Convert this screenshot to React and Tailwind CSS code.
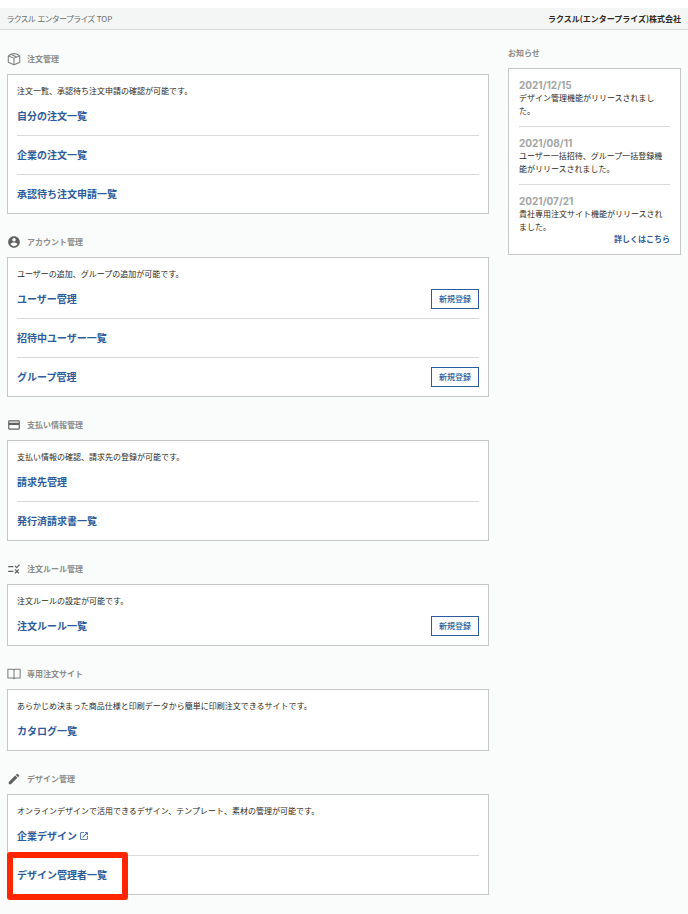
import React from "react";
import { MdCreditCard, MdEdit, MdOpenInNew, MdRule } from "react-icons/md";

const BoxIcon = () => (
  <svg viewBox="0 0 24 24" className="size-[14px]" fill="none" stroke="#7c7e7d" strokeWidth="1.8" strokeLinejoin="round">
    <path d="M12 2.5 17.5 3.8 21.8 7V17.5L12 22 2.2 17.5V7L6.5 3.8Z" />
    <path d="M2.2 7 12 10.5 21.8 7M12 10.5V22M6.5 3.8 16.5 8.5" />
  </svg>
);

const AccountIcon = () => (
  <svg viewBox="0 0 24 24" className="size-[14px]" fill="currentColor">
    <path d="M12 2C6.48 2 2 6.48 2 12s4.48 10 10 10 10-4.48 10-10S17.52 2 12 2zm0 3c1.66 0 3 1.34 3 3s-1.34 3-3 3-3-1.34-3-3 1.34-3 3-3zm0 14.2c-2.5 0-4.71-1.28-6-3.22.03-1.99 4-3.08 6-3.08 1.99 0 5.97 1.09 6 3.08-1.29 1.94-3.5 3.22-6 3.22z" />
  </svg>
);

const BookIcon = () => (
  <svg viewBox="0 0 24 24" className="size-[14px]" fill="none" stroke="#7c7e7d" strokeWidth="1.8" strokeLinejoin="round">
    <path d="M12 5C11.3 4 10.3 3.7 9 3.7H1.5V19H9.5C10.8 19 11.5 19.2 12 20.2C12.5 19.2 13.2 19 14.5 19H22.5V3.7H15C13.7 3.7 12.7 4 12 5ZM12 5V20" />
  </svg>
);

const sections = [
  {
    title: "注文管理",
    icon: <BoxIcon />,
    description: "注文一覧、承認待ち注文申請の確認が可能です。",
    items: [
      { label: "自分の注文一覧" },
      { label: "企業の注文一覧" },
      { label: "承認待ち注文申請一覧" },
    ],
  },
  {
    title: "アカウント管理",
    icon: <AccountIcon />,
    description: "ユーザーの追加、グループの追加が可能です。",
    items: [
      { label: "ユーザー管理", canCreate: true },
      { label: "招待中ユーザー一覧" },
      { label: "グループ管理", canCreate: true },
    ],
  },
  {
    title: "支払い情報管理",
    icon: <MdCreditCard className="size-[14px]" />,
    description: "支払い情報の確認、請求先の登録が可能です。",
    items: [{ label: "請求先管理" }, { label: "発行済請求書一覧" }],
  },
  {
    title: "注文ルール管理",
    icon: <MdRule className="size-[14px]" />,
    description: "注文ルールの設定が可能です。",
    items: [{ label: "注文ルール一覧", canCreate: true }],
  },
  {
    title: "専用注文サイト",
    icon: <BookIcon />,
    description:
      "あらかじめ決まった商品仕様と印刷データから簡単に印刷注文できるサイトです。",
    items: [{ label: "カタログ一覧" }],
  },
  {
    title: "デザイン管理",
    icon: <MdEdit className="size-[14px]" />,
    description:
      "オンラインデザインで活用できるデザイン、テンプレート、素材の管理が可能です。",
    items: [
      { label: "企業デザイン", external: true },
      { label: "デザイン管理者一覧", highlight: true },
    ],
  },
];

const news = [
  { date: "2021/12/15", text: "デザイン管理機能がリリースされました。" },
  {
    date: "2021/08/11",
    text: "ユーザー一括招待、グループ一括登録機能がリリースされました。",
  },
  {
    date: "2021/07/21",
    text: "貴社専用注文サイト機能がリリースされました。",
    more: true,
  },
];

const MenuItem = ({ item }) => (
  <li className="relative">
    <div className="flex h-[38px] items-center justify-between">
      <a
        href="#"
        className="flex items-center gap-[2px] text-[10px] leading-3 font-bold text-[#2d5b9b] hover:underline"
      >
        {item.label}
        {item.external && <MdOpenInNew className="size-[10px]" />}
      </a>
      {item.canCreate && (
        <button
          type="button"
          className="h-5 w-12 cursor-pointer border border-[#2d5b9b] bg-white text-[8px] leading-3 font-medium text-[#2d5b9b]"
        >
          新規登録
        </button>
      )}
    </div>
    {item.highlight && (
      <span
        aria-hidden="true"
        className="pointer-events-none absolute -top-1 -left-[10px] h-12 w-[121px] rounded-[3px] border-6 border-[#ff2600]"
      />
    )}
  </li>
);

const Section = ({ section }) => (
  <section>
    <h2 className="mb-2 flex h-[14px] items-center gap-[6px] text-[8px] leading-3 font-bold text-[#8a8c8b]">
      <span className="text-[#5f6160]">{section.icon}</span>
      {section.title}
    </h2>
    <div className="border border-[#c5c8c7] bg-white px-[9px] pt-[10px]">
      <p className="text-[8px] leading-3">{section.description}</p>
      <ul className="divide-y divide-[#d8dada]">
        {section.items.map((item) => (
          <MenuItem key={item.label} item={item} />
        ))}
      </ul>
    </div>
  </section>
);

const News = () => (
  <aside className="w-[173px] shrink-0 pt-[17px]">
    <h2 className="mb-[9px] text-[8px] leading-3 font-bold text-[#8a8c8b]">
      お知らせ
    </h2>
    <ul className="divide-y divide-[#d8dada] border border-[#c5c8c7] bg-white px-[10px]">
      {news.map((item) => (
        <li key={item.date} className="pt-[10px] pb-[9px]">
          <time className="block font-['Inter',sans-serif] text-[10px] leading-3 font-bold text-[#a3a5a4]">
            {item.date}
          </time>
          <p className="pr-1 text-[8px] leading-[13px]">{item.text}</p>
          {item.more && (
            <a
              href="#"
              className="block text-right text-[8px] leading-3 font-bold text-[#2d5b9b] hover:underline"
            >
              詳しくはこちら
            </a>
          )}
        </li>
      ))}
    </ul>
  </aside>
);

const App = () => {
  return (
    <div
      lang="ja"
      className="flex min-h-screen flex-col bg-[#fafcfb] font-['Noto_Sans_CJK_JP',sans-serif] text-[#2e2820]"
    >
      <header className="flex items-center justify-between border-t-8 border-b border-t-white border-b-[#d5d8d7] bg-[#f4f6f6] px-[7px] text-[8px] leading-[21px]">
        <p className="text-[#6b6d6c] [font-feature-settings:'palt']">
          ラクスル エンタープライズ TOP
        </p>
        <p className="font-bold">ラクスル(エンタープライズ)株式会社</p>
      </header>
      <div className="flex items-start gap-[19px] px-[7px] pb-[18px]">
        <main className="flex min-w-0 flex-1 flex-col gap-[21px] pt-[22px]">
          {sections.map((section) => (
            <Section key={section.title} section={section} />
          ))}
        </main>
        <News />
      </div>
    </div>
  );
};

export default App;
